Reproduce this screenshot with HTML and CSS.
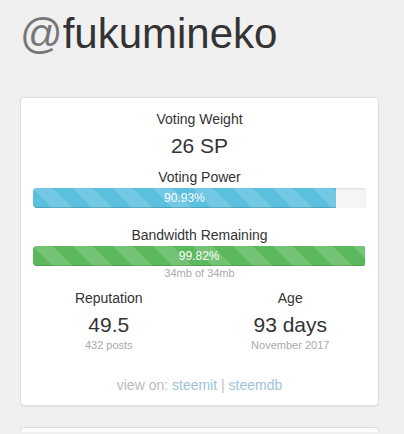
FILE: index.html
```html
<!DOCTYPE html>
<html>
<head>
    <meta charset="UTF-8">
    <title>@fukumineko</title>
    <link rel="stylesheet" href="styles.css">
</head>
<body>

    <div class="page">

        <h1 class="username"><span class="at">@</span>fukumineko</h1>

        <div class="panel">

            <div class="label">Voting Weight</div>
            <div class="value weight">26 SP</div>

            <div class="label vp-label">Voting Power</div>
            <div class="progress">
                <div class="bar bar-info" style="width: 90.93%">90.93%</div>
            </div>

            <div class="label bw-label">Bandwidth Remaining</div>
            <div class="progress">
                <div class="bar bar-success" style="width: 99.82%">99.82%</div>
            </div>
            <div class="small">34mb of 34mb</div>

            <div class="row">
                <div class="col">
                    <div class="label">Reputation</div>
                    <div class="value">49.5</div>
                    <div class="small">432 posts</div>
                </div>
                <div class="col">
                    <div class="label">Age</div>
                    <div class="value">93 days</div>
                    <div class="small">November 2017</div>
                </div>
            </div>

            <div class="links">
                view on: <a href="#">steemit</a> | <a href="#">steemdb</a>
            </div>

        </div>

        <div class="panel empty"></div>

    </div>

</body>
</html>
```

FILE: styles.css
```css
* {
    -webkit-box-sizing: border-box;
    -moz-box-sizing: border-box;
    box-sizing: border-box;
}

body {
    margin: 0;
    background: #f0f0f0;
    color: #333;
    font-family: "Liberation Sans", Arial, sans-serif;
    font-size: 14px;
    line-height: 20px;
}

.page {
    padding: 0 25px 0 20px;
}

.username {
    margin: 0 0 41px;
    padding-top: 12px;
    font-size: 42px;
    line-height: 44px;
    font-weight: normal;
    color: #333;
}

.username .at {
    color: #777;
}

.panel {
    background: #fff;
    border: 1px solid #ddd;
    border-radius: 4px;
    box-shadow: 0 1px 1px rgba(0, 0, 0, 0.05);
    padding: 11px 12px 10px;
    text-align: center;
}

.panel.empty {
    margin-top: 21px;
    height: 5px;
    padding: 0;
    border-bottom: 0;
    border-radius: 4px 4px 0 0;
}

.label {
    font-size: 14px;
    line-height: 20px;
}

.value {
    font-size: 21px;
    line-height: 23px;
    margin-top: 5px;
}

.weight {
    margin-bottom: 10px;
}

.vp-label,
.bw-label {
    margin-bottom: 1px;
}

.bw-label {
    margin-top: 17px;
}

.progress {
    height: 20px;
    background: #f5f5f5;
    border-radius: 4px;
    overflow: hidden;
    box-shadow: inset 0 1px 2px rgba(0, 0, 0, 0.1);
}

.bar {
    height: 100%;
    color: #fff;
    font-size: 12px;
    line-height: 20px;
    text-align: center;
    box-shadow: inset 0 -1px 0 rgba(0, 0, 0, 0.15);
    background-image: linear-gradient(45deg, rgba(255, 255, 255, 0.15) 25%, transparent 25%, transparent 50%, rgba(255, 255, 255, 0.15) 50%, rgba(255, 255, 255, 0.15) 75%, transparent 75%, transparent);
    background-size: 40px 40px;
}

.bar-info {
    background-color: #5bc0de;
}

.bar-success {
    background-color: #5cb85c;
}

.small {
    font-size: 11px;
    line-height: 14px;
    color: #aaa;
}

.row {
    display: grid;
    grid-template-columns: 1fr 1fr;
    margin: 8px -15px 0;
}

.row .value {
    margin-bottom: 2px;
}

.links {
    margin-top: 23px;
    color: #bbb;
}

.links a {
    color: #9ec3d6;
    text-decoration: none;
}
```
